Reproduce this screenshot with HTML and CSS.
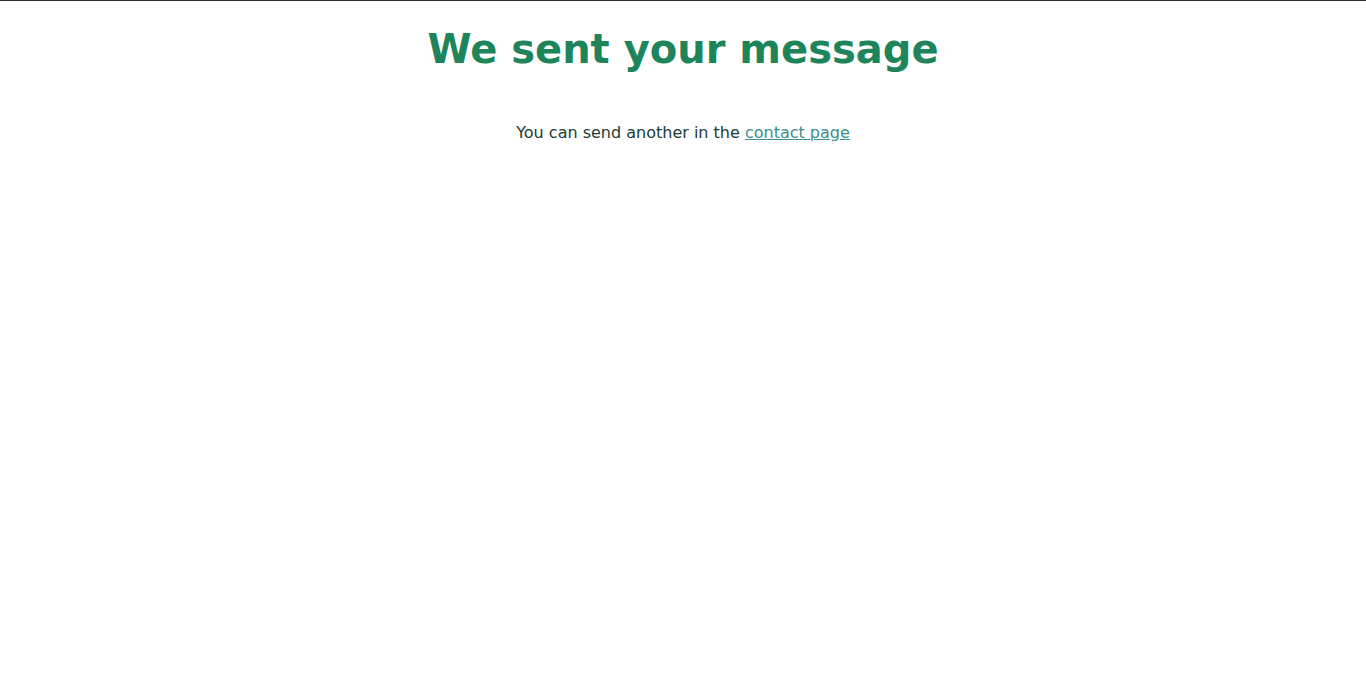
FILE: index.html
```html
<!DOCTYPE html>
<html lang="en">
<head>
<meta charset="utf-8">
<title>Message sent</title>
<link rel="stylesheet" href="styles.css">
</head>
<body>
<main class="page">
  <h1 class="title">We sent your message</h1>
  <p class="note">You can send another in the <a class="link" href="#">contact page</a></p>
</main>
</body>
</html>
```
FILE: styles.css
```css
html, body {
  margin: 0;
  padding: 0;
  background: #ffffff;
}
body {
  border-top: 1px solid #2b2b2b;
  font-family: "DejaVu Sans", sans-serif;
}
.page {
  display: flex;
  flex-direction: column;
  align-items: center;
  text-align: center;
}
.title {
  margin: 24px 0 0;
  font-size: 40px;
  line-height: 48px;
  font-weight: bold;
  color: #1e8459;
}
.note {
  margin: 49px 0 0;
  font-size: 16px;
  line-height: 22px;
  color: #1c3b35;
}
.link {
  color: #3b8f8c;
  text-decoration: underline;
}
```
